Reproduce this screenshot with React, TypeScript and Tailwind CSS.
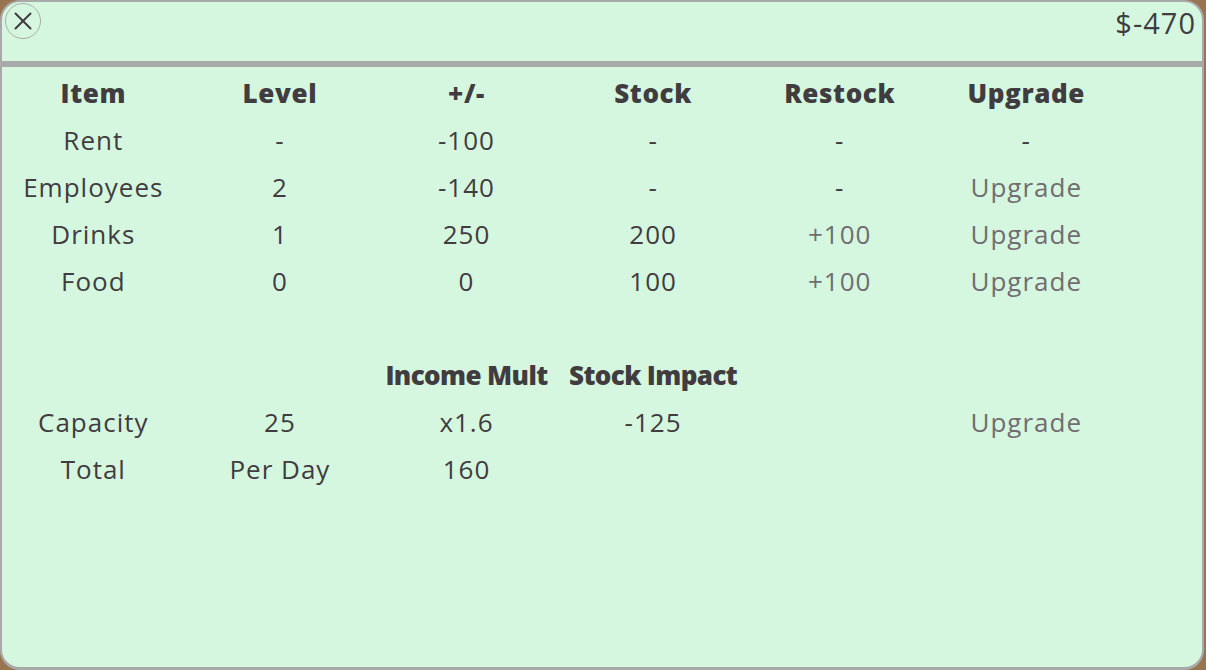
import { X } from "lucide-react";

type Cell = { text: string; muted?: boolean };

const HEAD = ["Item", "Level", "+/-", "Stock", "Restock", "Upgrade"];

const ROWS: Cell[][] = [
  [{ text: "Rent" }, { text: "-" }, { text: "-100" }, { text: "-" }, { text: "-" }, { text: "-" }],
  [{ text: "Employees" }, { text: "2" }, { text: "-140" }, { text: "-" }, { text: "-" }, { text: "Upgrade", muted: true }],
  [{ text: "Drinks" }, { text: "1" }, { text: "250" }, { text: "200" }, { text: "+100", muted: true }, { text: "Upgrade", muted: true }],
  [{ text: "Food" }, { text: "0" }, { text: "0" }, { text: "100" }, { text: "+100", muted: true }, { text: "Upgrade", muted: true }],
];

const HEAD2 = ["", "", "Income Mult", "Stock Impact", "", ""];

const ROWS2: Cell[][] = [
  [{ text: "Capacity" }, { text: "25" }, { text: "x1.6" }, { text: "-125" }, { text: "" }, { text: "Upgrade", muted: true }],
  [{ text: "Total" }, { text: "Per Day" }, { text: "160" }, { text: "" }, { text: "" }, { text: "" }],
];

function HeadRow({ cells, tight }: { cells: string[]; tight?: boolean }) {
  return (
    <div className="grid h-[47px] grid-cols-[repeat(6,186.6px)] items-center">
      {cells.map((c, i) => (
        <div
          key={i}
          className={
            "whitespace-nowrap text-center text-[26px] font-extrabold text-[#403c40] " +
            (tight ? "tracking-[-0.6px]" : "tracking-[0.6px]")
          }
        >
          {c}
        </div>
      ))}
    </div>
  );
}

function BodyRow({ cells }: { cells: Cell[] }) {
  return (
    <div className="grid h-[47px] grid-cols-[repeat(6,186.6px)] items-center">
      {cells.map((c, i) => (
        <div
          key={i}
          className={
            "whitespace-nowrap text-center text-[26px] tracking-[1px] " +
            (c.muted ? "text-[#716c71]" : "text-[#403c40]")
          }
        >
          {c.text}
        </div>
      ))}
    </div>
  );
}

export default function App() {
  return (
    <div className="h-[670px] w-[1206px] bg-[#9a7450]" style={{ fontFamily: '"Open Sans", sans-serif' }}>
      <div className="flex h-full w-[1204px] flex-col overflow-hidden rounded-[20px] border-2 border-b-[3px] border-[#a9a9a9] bg-[#d6f7df]">
        {/* Top bar */}
        <div className="flex h-[59px] items-start justify-between pl-[3px] pr-[6px] pt-[1px]">
          <button className="flex h-[36px] w-[36px] items-center justify-center rounded-full border border-[#aaaaaa] text-[#403c40]">
            <X size={30} strokeWidth={1.6} />
          </button>
          <span className="text-[29px] leading-[40px] tracking-[1px] text-[#403c40]">$-470</span>
        </div>
        <div className="h-[6px] bg-[#a9a9a9]" />

        {/* Table */}
        <div className="ml-[-2px] pt-[3px]">
          <HeadRow cells={HEAD} />
          {ROWS.map((r, i) => (
            <BodyRow key={i} cells={r} />
          ))}
          <div className="h-[47px]" />
          <HeadRow cells={HEAD2} tight />
          {ROWS2.map((r, i) => (
            <BodyRow key={i} cells={r} />
          ))}
        </div>
      </div>
    </div>
  );
}
